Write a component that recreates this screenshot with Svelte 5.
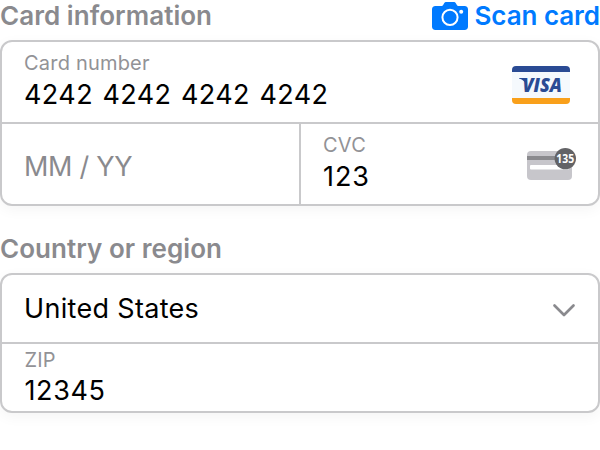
<script>
  const cardNumber = '4242 4242 4242 4242';
  const cvc = '123';
  const zip = '12345';
</script>

<main>
  <header class="top">
    <h2>Card information</h2>
    <button class="scan">
      <svg width="38" height="30" viewBox="0 0 38 30" aria-hidden="true">
        <path fill="#007aff" d="M4.500 5h5.800c1 0 1.500-.5 2-1.300l.7-1.200C13.600 1.300 14.400 1 15.500 1h7c1.100 0 1.900.3 2.500 1.500l.7 1.200c.5.8 1 1.300 2 1.300H33.500c2.300 0 3.500 1.300 3.500 3.500v17c0 2.300-1.200 3.500-3.500 3.500h-29C2.200 29 1 27.800 1 25.500v-17C1 6.300 2.200 5 4.500 5z" />
        <circle cx="19" cy="16.300" r="7.600" fill="none" stroke="#fff" stroke-width="2" />
        <circle cx="30.200" cy="10.800" r="2" fill="#fff" />
      </svg>
      <span>Scan card</span>
    </button>
  </header>

  <section class="box card">
    <div class="cell number">
      <div class="field">
        <label for="num">Card number</label>
        <span id="num" class="value v-num">{cardNumber}</span>
      </div>
      <svg class="visa" width="58" height="38" viewBox="0 0 58 38" aria-label="Visa">
        <path fill="#f5f9fd" d="M0 6h58v26H0z" />
        <path fill="#2a4b94" d="M0 6V4a4 4 0 0 1 4-4h50a4 4 0 0 1 4 4v2z" />
        <path fill="#f9a01b" d="M0 32v2a4 4 0 0 0 4 4h50a4 4 0 0 0 4-4v-2z" />
        <path fill="#2a4b94" d="M7 12h5c1.300 0 1.800.6 2 1.800l1.200 6c-1.500-3.700-4.300-6.300-8.200-7.400z" />
        <text x="10.500" y="25.700" textLength="39.500" lengthAdjust="spacingAndGlyphs">VISA</text>
      </svg>
    </div>
    <div class="row">
      <div class="cell expiry"><span class="placeholder">MM / YY</span></div>
      <div class="cell code">
        <div class="field">
          <label for="cvc">CVC</label>
          <span id="cvc" class="value v-cvc">{cvc}</span>
        </div>
        <svg class="cvc-icon" width="50" height="34" viewBox="0 0 50 34" aria-hidden="true">
          <rect x="0" y="3" width="45" height="29" rx="4" fill="#c7c6cb" />
          <path fill="#8a8a8e" d="M0 8h45v4H0z" />
          <rect x="3" y="17" width="39" height="4.500" rx="1" fill="#fff" />
          <circle cx="38.300" cy="10.600" r="10.700" fill="#636366" />
          <text x="29.300" y="15.200" textLength="17.800" lengthAdjust="spacingAndGlyphs">135</text>
        </svg>
      </div>
    </div>
  </section>

  <h2 class="second">Country or region</h2>

  <section class="box region">
    <div class="cell country">
      <span class="value v-country">United States</span>
      <svg width="24" height="15" viewBox="0 0 24 15" aria-hidden="true">
        <path d="M2.500 2.500 12 12l9.500-9.500" fill="none" stroke="#8a8a8e" stroke-width="2.700" stroke-linecap="round" stroke-linejoin="round" />
      </svg>
    </div>
    <div class="cell zip">
      <div class="field">
        <label for="zip">ZIP</label>
        <span id="zip" class="value v-zip">{zip}</span>
      </div>
    </div>
  </section>
</main>

<style>
  :global(body) {
    margin: 0;
    background: #fff;
    overflow: hidden;
  }
  main {
    width: 600px;
    height: 450px;
    box-sizing: border-box;
    font-family: Inter, "Liberation Sans", sans-serif;
    color: #000;
    white-space: nowrap;
  }
  .top {
    display: flex;
    justify-content: space-between;
    height: 40px;
  }
  h2 {
    margin: 0;
    font-size: 26px;
    line-height: 32px;
    font-weight: 600;
    color: #8a8a8e;
    letter-spacing: 0.05px;
  }
  .scan {
    display: flex;
    align-items: flex-start;
    gap: 5px;
    padding: 0;
    border: 0;
    background: none;
    color: #007aff;
    font: 600 26px/32px Inter, "Liberation Sans", sans-serif;
  }
  .scan span { letter-spacing: -0.05px; }
  .scan svg { margin-top: 1px; }
  .box {
    display: flex;
    flex-direction: column;
    box-sizing: border-box;
    border: 2px solid #c9c9cb;
    border-radius: 12px;
    background: #fff;
    box-shadow: 0 4px 14px rgba(0, 0, 0, 0.045);
  }
  .card { height: 166px; }
  .region { height: 140px; }
  .cell {
    display: flex;
    box-sizing: border-box;
    padding-left: 22px;
    justify-content: space-between;
  }
  .number {
    height: 82px;
    border-bottom: 2px solid #c9c9cb;
    padding-top: 8px;
    padding-right: 28px;
  }
  .visa { margin-top: 16px; }
  .visa text {
    font: italic 800 19.500px "Open Sans", sans-serif;
    fill: #2a4b94;
  }
  .row { display: flex; height: 80px; }
  .expiry {
    width: 299px;
    border-right: 2px solid #c9c9cb;
    align-items: center;
    padding-top: 4px;
  }
  .placeholder {
    font-size: 27px;
    letter-spacing: -0.28px;
    color: #8a8a8e;
  }
  .code {
    flex: 1;
    padding-top: 8px;
    padding-right: 21px;
  }
  .cvc-icon {
    margin-top: 16px;
    overflow: visible;
  }
  .cvc-icon text {
    font: 700 13px "Noto Sans", sans-serif;
    fill: #fff;
  }
  .field { display: flex; flex-direction: column; }
  label {
    font-size: 20px;
    line-height: 27px;
    letter-spacing: 0.2px;
    color: #929296;
  }
  .value { font-size: 27px; line-height: 36px; }
  .v-num { letter-spacing: 0.4px; word-spacing: 1.500px; }
  .v-cvc { letter-spacing: 0.9px; }
  .v-country { letter-spacing: 0.32px; }
  .v-zip { letter-spacing: 0.6px; line-height: 34px; }
  .country {
    height: 69px;
    border-bottom: 2px solid #c9c9cb;
    align-items: center;
    padding-right: 22px;
  }
  .country svg { margin-top: 4px; }
  .zip { padding-top: 3px; padding-left: 22.500px; }
  .second { padding-top: 27px; height: 40px; }
</style>
